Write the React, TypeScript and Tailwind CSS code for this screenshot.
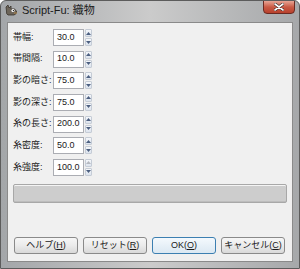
import React from 'react'

const FONT = { fontFamily: '"Liberation Sans", "Noto Sans CJK JP", sans-serif' }

type Field = { label: string; value: string; atMax?: boolean; w?: string }

const fields: Field[] = [
  { label: '帯幅:', value: '30.0' },
  { label: '帯間隔:', value: '10.0' },
  { label: '影の暗さ:', value: '75.0' },
  { label: '影の深さ:', value: '75.0' },
  { label: '糸の長さ:', value: '200.0' },
  { label: '糸密度:', value: '50.0' },
  { label: '糸強度:', value: '100.0', atMax: true },
]

function Wilber() {
  return (
    <svg width="13" height="12" viewBox="0 0 13 12">
      <path d="M1 3 L3 1 L4 4 L6 2 L6 5 Q10 4 11.5 7 Q12 10 9 11 L3 11 Q1 10 1.5 7 Z" fill="#6d655a" stroke="#3a342c" strokeWidth="0.8" />
      <circle cx="8" cy="6.5" r="1.6" fill="#fff" />
      <circle cx="8.4" cy="6.6" r="0.7" fill="#111" />
      <path d="M9 9 L12 9" stroke="#b58a4a" strokeWidth="1" />
    </svg>
  )
}

function Spin({ atMax }: { atMax?: boolean }) {
  return (
    <div className="flex flex-col w-[7px] h-[17px] ml-[1px] gap-[1px]">
      {[0, 1].map((i) => (
        <div
          key={i}
          className="flex-1 flex items-center justify-center border border-[#c5ccd6] rounded-[1px] bg-gradient-to-b from-[#f5f7fa] to-[#dde4ee]"
        >
          <svg width="5" height="3" viewBox="0 0 5 3">
            {i === 0 ? (
              <path d="M0 3 L2.5 0 L5 3 Z" fill={atMax ? '#b4b8bf' : '#4c5f80'} />
            ) : (
              <path d="M0 0 L2.5 3 L5 0 Z" fill="#4c5f80" />
            )}
          </svg>
        </div>
      ))}
    </div>
  )
}

function Btn({ label, key1, focused }: { label: string; key1: string; focused?: boolean }) {
  return (
    <div
      className={`w-[64px] h-[17px] rounded-[3px] border flex items-center justify-center text-[9px] text-[#1a1a1a] ${
        focused
          ? 'border-[#3c7fb1] bg-gradient-to-b from-[#f4f9fd] to-[#dbe8f2]'
          : 'border-[#8a8a8a] bg-gradient-to-b from-[#f6f6f6] via-[#ebebeb] to-[#d9d9d9]'
      }`}
    >
      {label}(<span className="underline">{key1}</span>)
    </div>
  )
}

export default function App() {
  return (
    <div
      className="w-[300px] h-[269px] flex flex-col rounded-t-[6px] border border-[#5c5c5c] bg-gradient-to-r from-[#a3a6a9] via-[#cbcbcb] to-[#a6a8aa] overflow-hidden"
      style={FONT}
    >
      <div className="h-[21px] flex items-start relative">
        <div className="flex items-center gap-[4px] pl-[4px] pt-[3px]">
          <Wilber />
          <span className="text-[11px] text-[#1b1b1b] leading-none">Script-Fu: 織物</span>
        </div>
        <div className="absolute right-[4px] top-[-1px] w-[32px] h-[14px] rounded-b-[4px] border border-[#6a2a22] bg-gradient-to-b from-[#e7a596] via-[#c95a45] to-[#b8402c] flex items-center justify-center">
          <svg width="10" height="8" viewBox="0 0 10 8">
            <path d="M1 1 L9 7 M9 1 L1 7" stroke="#3a2a28" strokeWidth="3" strokeLinecap="round" />
            <path d="M1 1 L9 7 M9 1 L1 7" stroke="#fff" strokeWidth="1.6" strokeLinecap="round" />
          </svg>
        </div>
      </div>
      <div className="flex-1 mx-[6px] mb-[6px] border border-[#8a8a8a] bg-[#f0f0f0] flex flex-col px-[5px] pt-[6px] pb-[7px]">
        <div className="flex flex-col gap-[4.67px]">
          {fields.map((f) => (
            <div key={f.label} className="flex items-center h-[17px]">
              <span className="w-[40px] text-[9px] text-[#1a1a1a]">{f.label}</span>
              <div className="w-[31px] h-[17px] border border-[#abadb3] bg-white flex items-center pl-[3px] text-[9px] text-[#1a1a1a]">
                {f.value}
              </div>
              <Spin atMax={f.atMax} />
            </div>
          ))}
        </div>
        <div className="mt-[8px] h-[19px] rounded-[2px] border border-[#a8a8a8] bg-[#cdcdcd] shadow-[inset_0_1px_0_#f4f4f4,inset_0_-1px_0_#bdbdbd]" />
        <div className="mt-auto flex gap-[5px] pl-[1px]">
          <Btn label="ヘルプ" key1="H" />
          <Btn label="リセット" key1="R" />
          <Btn label="OK" key1="O" focused />
          <Btn label="キャンセル" key1="C" />
        </div>
      </div>
    </div>
  )
}
